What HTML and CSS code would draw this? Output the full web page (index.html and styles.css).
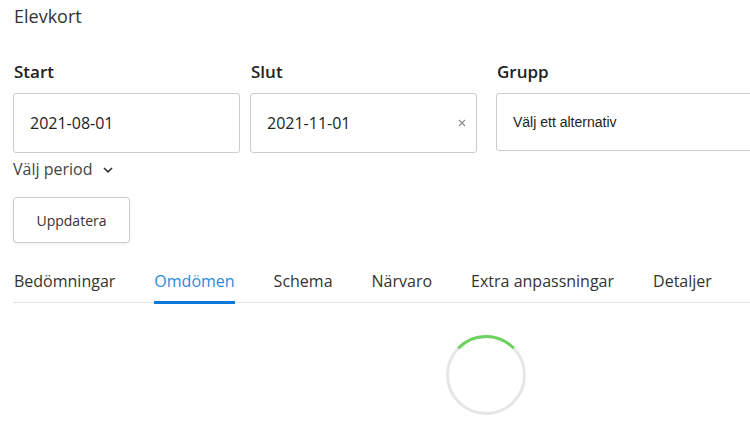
FILE: index.html
```html
<!DOCTYPE html>
<html lang="sv">
<head>
<meta charset="utf-8">
<link rel="stylesheet" href="styles.css">
</head>
<body>
<div class="page">
  <h1 class="title">Elevkort</h1>
  <div class="fields">
    <div class="field f1">
      <label class="label">Start</label>
      <div class="input">2021-08-01</div>
    </div>
    <div class="field f2">
      <label class="label">Slut</label>
      <div class="input">2021-11-01
        <svg class="clear" width="8" height="8" viewBox="0 0 8 8"><path d="M1 1 L7 7 M7 1 L1 7" stroke="#8a8a8a" stroke-width="1.1"/></svg>
      </div>
    </div>
    <div class="field f3">
      <label class="label">Grupp</label>
      <div class="input select">Välj ett alternativ</div>
    </div>
  </div>
  <div class="period">Välj period
    <svg class="chev" width="10" height="6" viewBox="0 0 10 6"><path d="M1 1 L5 4.8 L9 1" fill="none" stroke="#333" stroke-width="1.7"/></svg>
  </div>
  <button class="btn">Uppdatera</button>
  <nav class="tabs">
    <span class="tab">Bedömningar</span>
    <span class="tab active">Omdömen</span>
    <span class="tab">Schema</span>
    <span class="tab">Närvaro</span>
    <span class="tab">Extra anpassningar</span>
    <span class="tab">Detaljer</span>
  </nav>
  <div class="loader">
    <svg width="82" height="82" viewBox="0 0 82 82">
      <circle cx="41" cy="41" r="38.5" fill="none" stroke="#e6e6e6" stroke-width="3"/>
      <path d="M13.3 14.2 A38.5 38.5 0 0 1 68.7 14.2" fill="none" stroke="#6cd35e" stroke-width="3"/>
    </svg>
  </div>
</div>
</body>
</html>
```

FILE: styles.css
```css
html, body { margin: 0; padding: 0; background: #fff; }
body { font-family: "Open Sans", "Noto Sans", sans-serif; color: #333; overflow: hidden; }
.page { padding-left: 13px; }
.title { font-size: 18px; font-weight: 400; line-height: 24px; margin: 4px 0 0 1px; color: #333; }
.fields { display: flex; margin-top: 32px; }
.field { display: flex; flex-direction: column; flex: none; }
.f1 { width: 227px; margin-right: 10px; }
.f2 { width: 227px; margin-right: 19px; }
.f3 { width: 270px; }
.label { font-size: 17px; font-weight: 600; line-height: 24px; color: #222; margin-left: 1px; }
.input { margin-top: 9px; height: 58px; border: 1px solid #ccc; border-radius: 3px; display: flex; align-items: center; padding-left: 16px; font-size: 16px; color: #222; position: relative; }
.clear { position: absolute; right: 10px; top: 25px; }
.select { font-family: "Liberation Sans", Arial, sans-serif; font-size: 14px; height: 56px; color: #222; }
.period { margin-top: 5px; font-size: 16px; line-height: 22px; color: #444; display: flex; align-items: center; }
.chev { margin-left: 11px; margin-top: 2px; }
.btn { margin-top: 17px; display: block; width: 117px; height: 46px; border: 1px solid #ccc; border-radius: 4px; background: #fff; font-family: "Open Sans", sans-serif; font-size: 14px; color: #333; box-shadow: 0 1px 3px rgba(0,0,0,0.08); padding: 0; }
.tabs { margin-top: 27px; display: flex; gap: 39px; border-bottom: 1px solid #e4e4e4; padding-left: 1px; }
.tab { font-size: 16px; line-height: 22px; padding-bottom: 10px; color: #333; }
.tab.active { color: #2b8ae0; border-bottom: 3px solid #0a78d8; margin-bottom: -2px; padding-bottom: 9px; }
.loader { display: flex; margin-top: 31px; padding-left: 432px; }
```
